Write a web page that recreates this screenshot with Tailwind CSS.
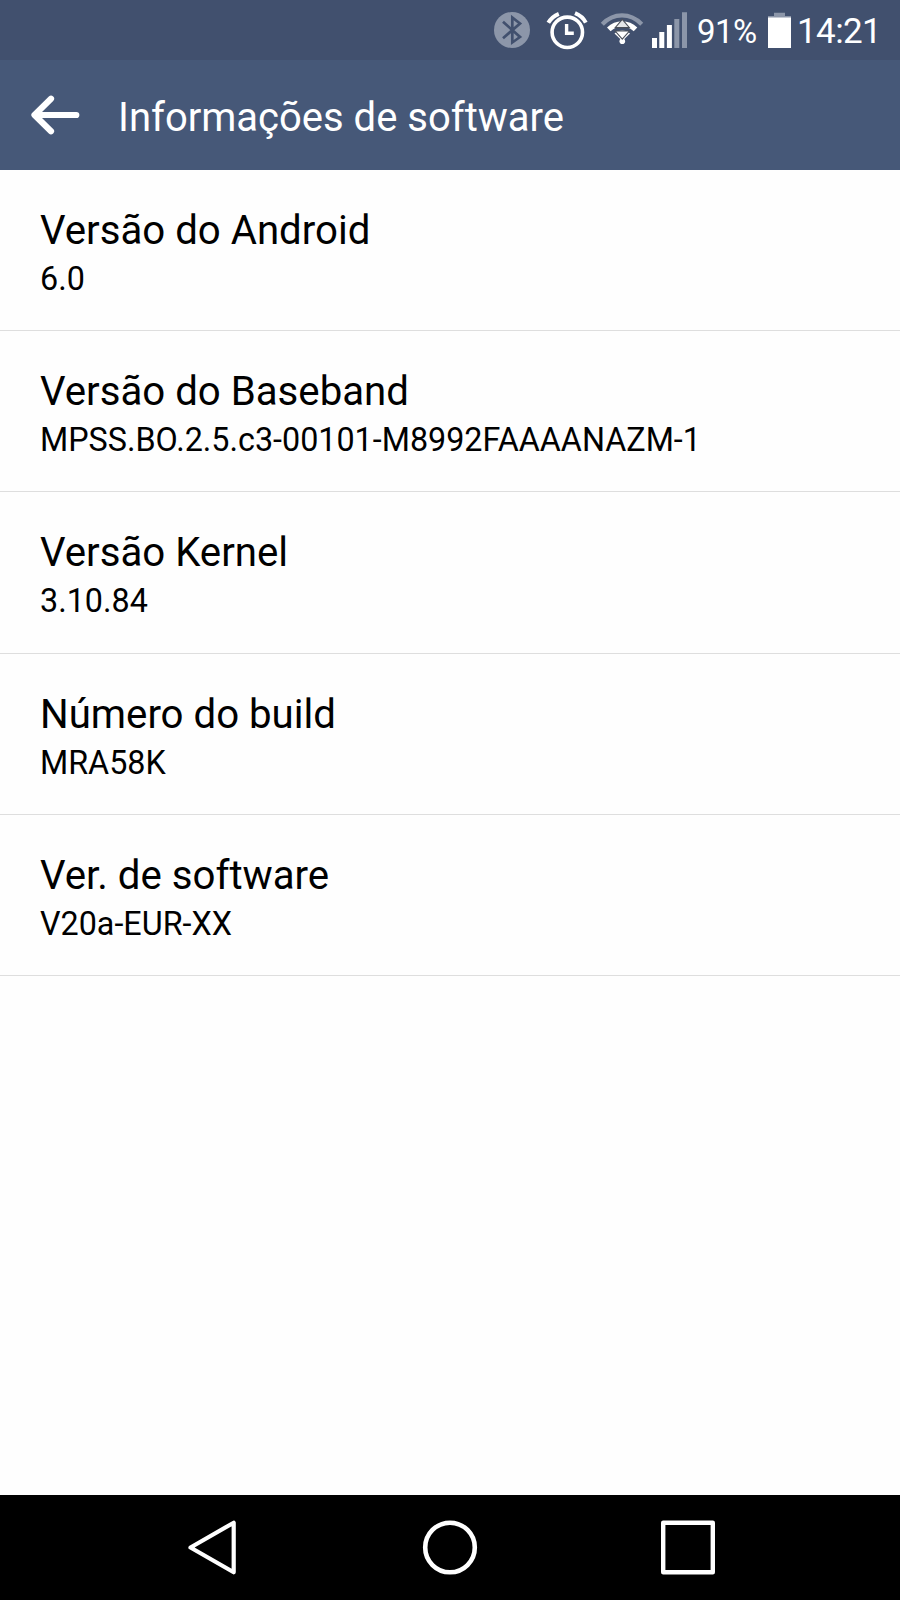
<!DOCTYPE html>
<html lang="pt">

<head>
    <meta charset="UTF-8">
    <meta name="viewport" content="width=device-width, initial-scale=1.0">
    <title>Informações de software</title>
    <script src="https://cdn.jsdelivr.net/npm/@tailwindcss/browser@4"></script>
</head>

<body class="bg-[#fefefe] text-black font-['Roboto',sans-serif] w-[900px] h-[1600px] flex flex-col overflow-hidden">
    <!-- Status bar -->
    <div class="h-[60px] shrink-0 bg-[#41506e] text-white flex items-center pl-[494px]">
        <!-- Bluetooth -->
        <svg class="w-9 h-[60px] shrink-0" viewBox="0 0 36 60" fill="none">
            <circle cx="18" cy="30" r="18" fill="#8c96a9" />
            <path d="M9 21.8L26 37L18.3 42.5V17.5L26 23.5L9 38.2" stroke="#41506e" stroke-width="2.7" />
        </svg>
        <!-- Alarm -->
        <svg class="w-[42px] h-[60px] ml-4 shrink-0" viewBox="0 0 42 60" fill="none" stroke="#fff">
            <circle cx="21.3" cy="32.3" r="15.2" stroke-width="3.6" />
            <path d="M2.3 22.8Q6 16.5 12.8 13.8M29 13.2Q36.5 16.3 39.8 22.6" stroke-width="4" />
            <path d="M20.6 24V33.3H27.8" stroke-width="3.4" />
        </svg>
        <!-- Wi-Fi -->
        <svg class="w-11 h-[60px] ml-3 shrink-0" viewBox="0 0 44 60" fill="none">
            <path d="M2.3 24.3C13.5 12.5 30.5 12.5 41.7 24.3" stroke="#8c96a9" stroke-width="4.2" />
            <path d="M8.8 29.3C16.5 22 27.8 22 35.5 29.3" stroke="#fff" stroke-width="5.2" />
            <path d="M14.5 33.5C19 29.5 25.6 29.5 30 33.5L22.3 41Z" fill="#fff" />
            <circle cx="22.3" cy="41.3" r="2.8" fill="#fff" />
            <path d="M22.3 19.4L29.4 27.6H15.2Z" fill="#e4e6e9" stroke="#4b5059" stroke-width="1.1" />
            <path d="M15.2 31H29.4L22.3 39.2Z" fill="#fff" stroke="#4b5059" stroke-width="1.1" />
        </svg>
        <!-- Signal -->
        <svg class="w-[37px] h-[60px] ml-[7px] shrink-0" viewBox="0 0 37 60">
            <path d="M1 38h5v10H1zM8.3 32h5v16h-5zM15.9 25h5v23h-5z" fill="#fff" />
            <path d="M23.3 19h5v29h-5zM31 12.3h5V48h-5z" fill="#8c96a9" />
        </svg>
        <span class="w-[71px] pt-[3px] ml-[9px] shrink-0 text-[33px] leading-[60px] tracking-[-0.5px]">91%</span>
        <!-- Battery -->
        <svg class="w-[23px] h-[60px] shrink-0" viewBox="0 0 23 60">
            <path d="M6 12.7h11V16h6v3H0v-3h6z" fill="#8c96a9" />
            <path d="M0 17.5h23V48H0z" fill="#fff" />
        </svg>
        <span class="ml-1.5 pt-[3px] text-[35px] leading-[60px] tracking-[-0.6px]">14:21</span>
    </div>

    <!-- Title bar -->
    <header class="h-[110px] shrink-0 bg-[#465878] text-white flex items-center pl-[30px]">
        <svg class="w-[52px] h-[42px] shrink-0" viewBox="0 0 52 42" fill="none" stroke="#fff" stroke-width="6.2" stroke-linecap="round" stroke-linejoin="round">
            <path d="M46.3 21H5M21 4.7L4.5 21L21 37.3" />
        </svg>
        <h1 class="ml-9 pt-1.5 text-[40px] leading-[48px]">Informações de software</h1>
    </header>

    <main class="flex-1">
        <div class="h-[161.2px] border-b border-[#dedede] px-10 pt-[37px]">
            <h2 class="text-[40.2px] leading-[48px]">Versão do Android</h2>
            <p class="mt-1 text-[32.3px] leading-10">6.0</p>
        </div>
        <div class="h-[161.2px] border-b border-[#dedede] px-10 pt-[37px]">
            <h2 class="text-[40.2px] leading-[48px]">Versão do Baseband</h2>
            <p class="mt-1 text-[32.3px] leading-10">MPSS.BO.2.5.c3-00101-M8992FAAAANAZM-1</p>
        </div>
        <div class="h-[161.2px] border-b border-[#dedede] px-10 pt-[37px]">
            <h2 class="text-[40.2px] leading-[48px]">Versão Kernel</h2>
            <p class="mt-1 text-[32.3px] leading-10">3.10.84</p>
        </div>
        <div class="h-[161.2px] border-b border-[#dedede] px-10 pt-[37px]">
            <h2 class="text-[40.2px] leading-[48px]">Número do build</h2>
            <p class="mt-1 text-[32.3px] leading-10">MRA58K</p>
        </div>
        <div class="h-[161.2px] border-b border-[#dedede] px-10 pt-[37px]">
            <h2 class="text-[40.2px] leading-[48px]">Ver. de software</h2>
            <p class="mt-1 text-[32.3px] leading-10">V20a-EUR-XX</p>
        </div>
    </main>

    <!-- Navigation bar -->
    <nav class="h-[105px] shrink-0 bg-black flex items-center pl-[188px]">
        <svg class="w-12 h-14 shrink-0" viewBox="0 0 48 56" fill="none" stroke="#fff" stroke-width="4.2" stroke-linejoin="round">
            <path d="M2.5 27.5L45.7 2.7V52.3Z" />
        </svg>
        <svg class="w-14 h-14 ml-[186px] shrink-0" viewBox="0 0 56 56" fill="none" stroke="#fff" stroke-width="4.6">
            <circle cx="28" cy="27.5" r="24.8" />
        </svg>
        <svg class="w-14 h-14 ml-[182px] shrink-0" viewBox="0 0 56 56" fill="none" stroke="#fff" stroke-width="4.4" stroke-linejoin="round">
            <path d="M3.2 2.7H52.8V52.3H3.2Z" />
        </svg>
    </nav>
</body>

</html>
